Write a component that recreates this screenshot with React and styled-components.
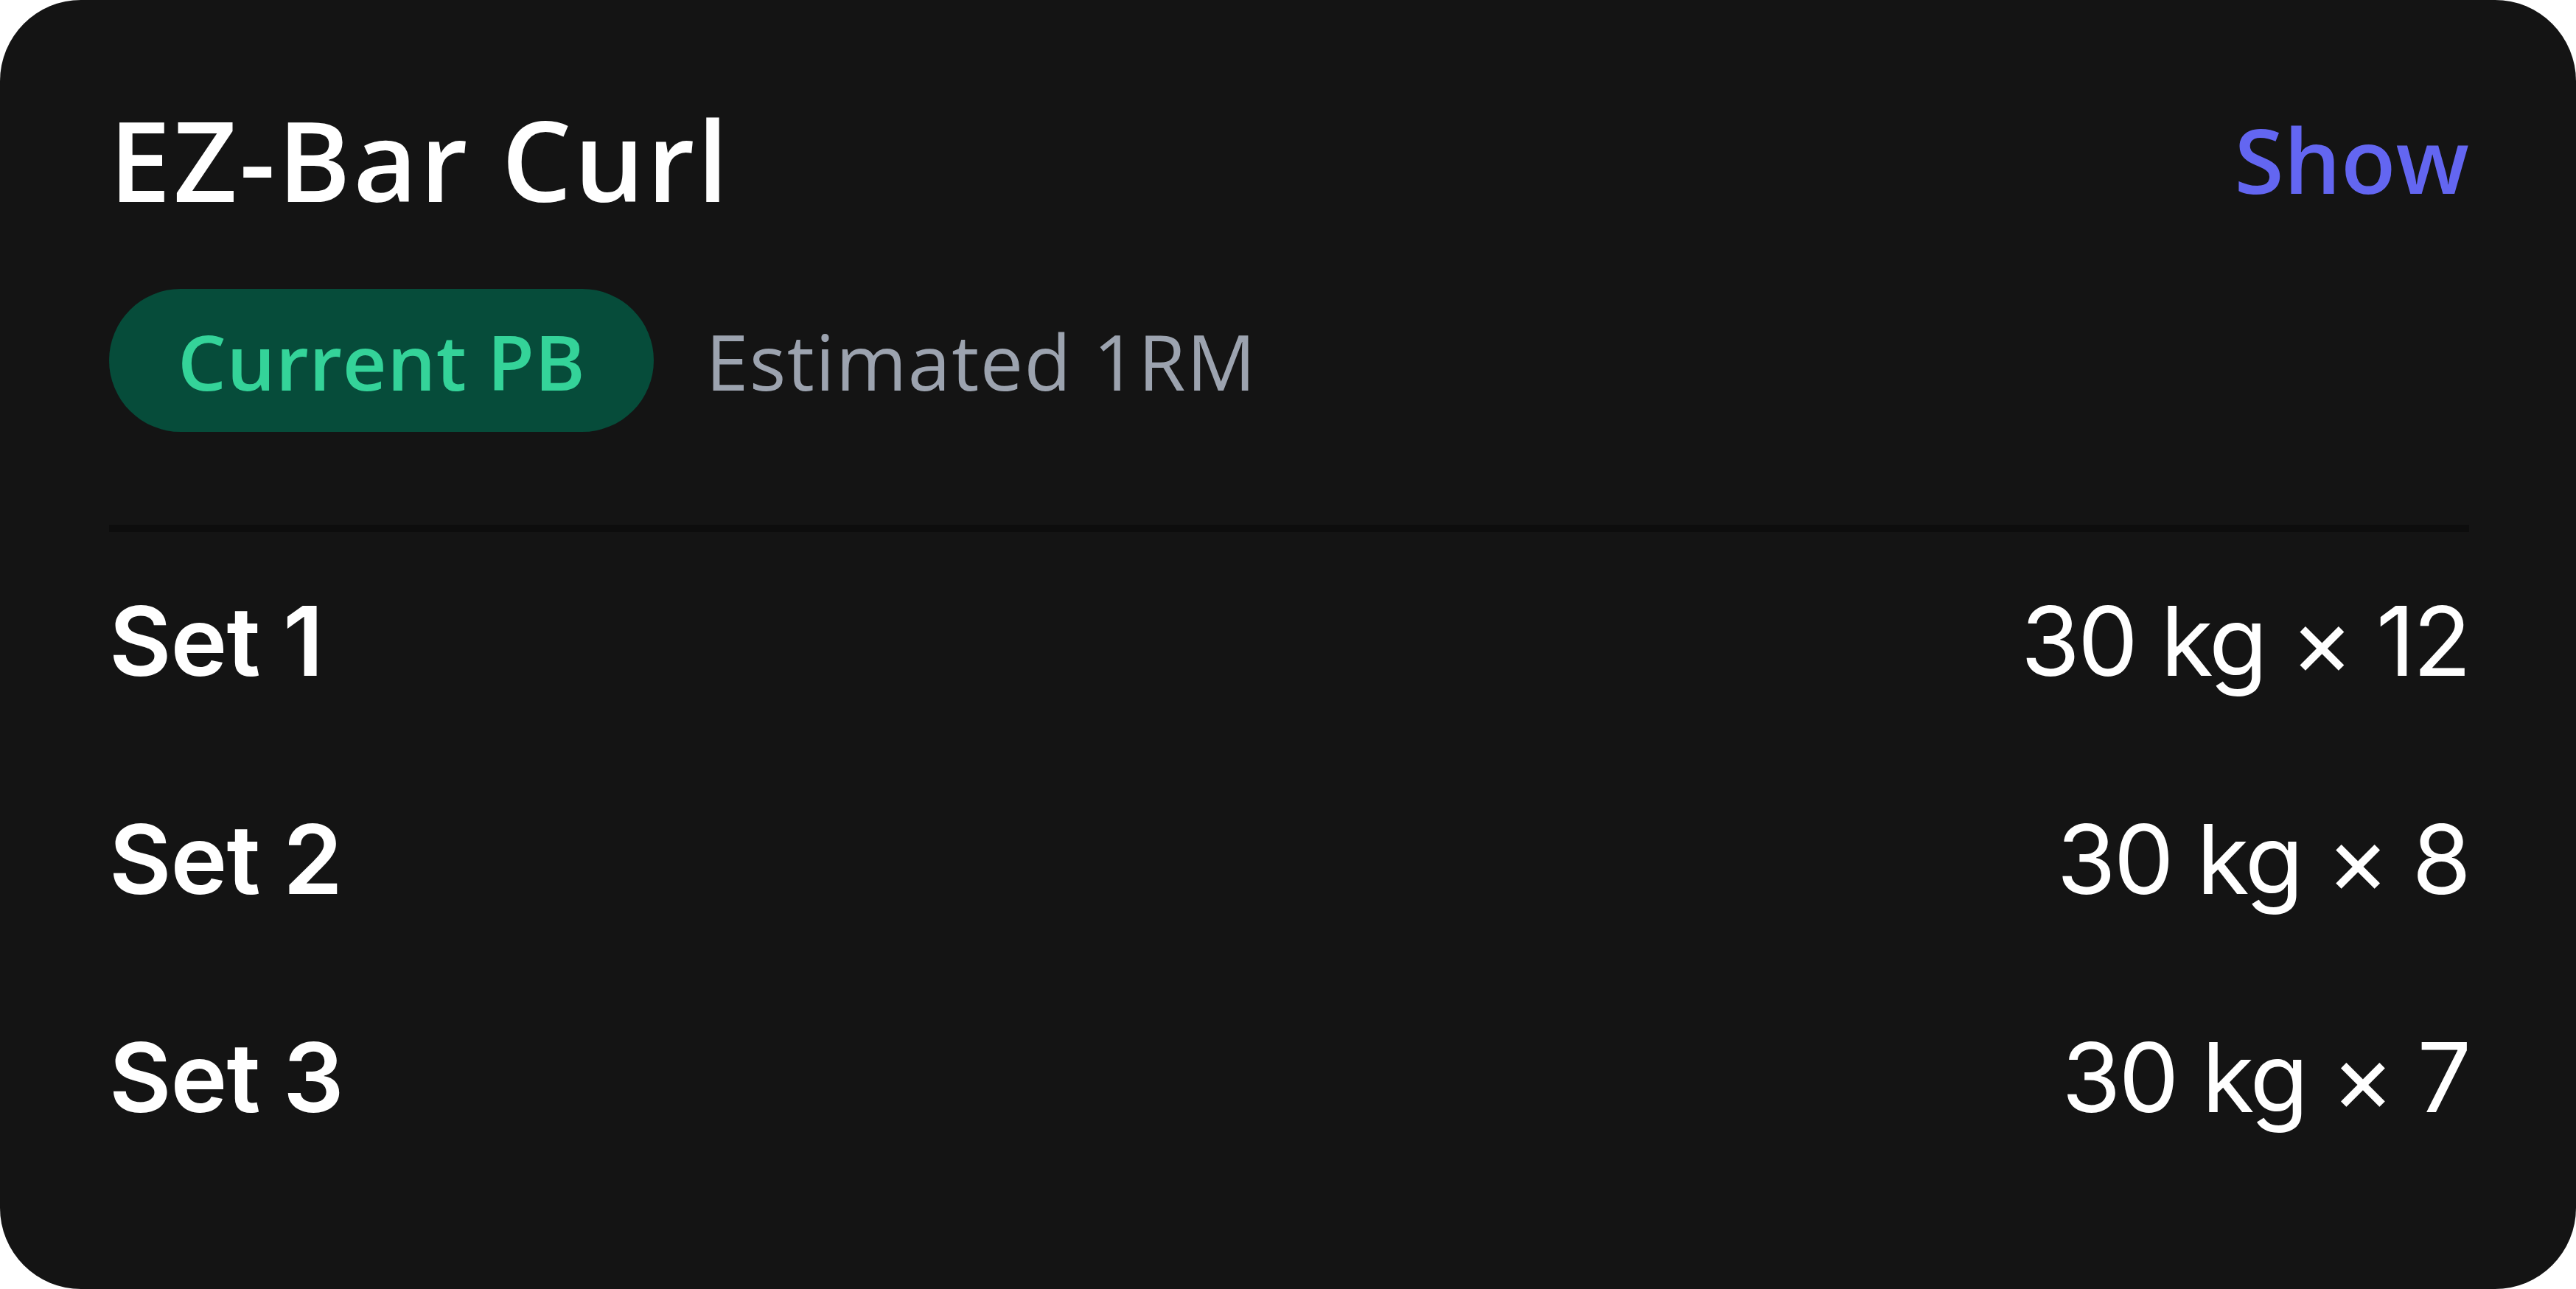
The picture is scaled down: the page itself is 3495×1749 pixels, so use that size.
import React from 'react';
import styled, { createGlobalStyle } from 'styled-components';

const GlobalStyle = createGlobalStyle`
  html, body {
    margin: 0;
    padding: 0;
    background: #ffffff;
  }
`;

const Card = styled.div`
  box-sizing: border-box;
  width: 3495px;
  height: 1749px;
  padding: 141px 145px 0 148px;
  background: #141414;
  border-radius: 110px;
  overflow: hidden;
`;

const Header = styled.div`
  display: flex;
  align-items: center;
  justify-content: space-between;
  height: 150px;
`;

const Title = styled.h1`
  margin: 0;
  font-family: 'Open Sans', sans-serif;
  font-size: 150px;
  font-weight: 600;
  line-height: 1;
  color: #ffffff;
  letter-spacing: 3.5px;
`;

const ShowLink = styled.button`
  border: none;
  background: none;
  padding: 0;
  font-family: 'Open Sans', sans-serif;
  font-size: 122px;
  font-weight: 600;
  line-height: 1;
  color: #6366f1;
  cursor: pointer;
`;

const Tabs = styled.div`
  display: flex;
  align-items: center;
  gap: 70px;
  margin-top: 101px;
`;

const Tab = styled.div`
  box-sizing: border-box;
  display: flex;
  align-items: center;
  height: 194px;
  padding: 0 ${(p) => (p.active ? '93px' : '0')};
  border-radius: 97px;
  background: ${(p) => (p.active ? '#064c3a' : 'transparent')};
  font-family: 'Open Sans', sans-serif;
  font-size: 104px;
  font-weight: ${(p) => (p.active ? 600 : 400)};
  letter-spacing: ${(p) => (p.active ? '0.5px' : '1.5px')};
  color: ${(p) => (p.active ? '#34d399' : '#9ca3af')};
`;

const Divider = styled.div`
  height: 10px;
  margin-top: 126px;
  background: #0d0d0d;
`;

const SetRow = styled.div`
  display: flex;
  align-items: center;
  justify-content: space-between;
  height: 296px;
  font-family: Inter, 'Liberation Sans', sans-serif;
  font-size: 130px;
  line-height: 296px;
  color: #ffffff;
`;

const SetLabel = styled.span`
  font-weight: 600;
  letter-spacing: -1px;
`;

const SetValue = styled.span`
  font-weight: 400;
  letter-spacing: -3px;
`;

const sets = [
  { label: 'Set 1', value: '30 kg × 12' },
  { label: 'Set 2', value: '30 kg × 8' },
  { label: 'Set 3', value: '30 kg × 7' },
];

const App = () => {
  return (
    <>
      <GlobalStyle />
      <Card>
        <Header>
          <Title>EZ-Bar Curl</Title>
          <ShowLink>Show</ShowLink>
        </Header>
        <Tabs>
          <Tab active>Current PB</Tab>
          <Tab>Estimated 1RM</Tab>
        </Tabs>
        <Divider />
        {sets.map((set) => (
          <SetRow key={set.label}>
            <SetLabel>{set.label}</SetLabel>
            <SetValue>{set.value}</SetValue>
          </SetRow>
        ))}
      </Card>
    </>
  );
};

export default App;
